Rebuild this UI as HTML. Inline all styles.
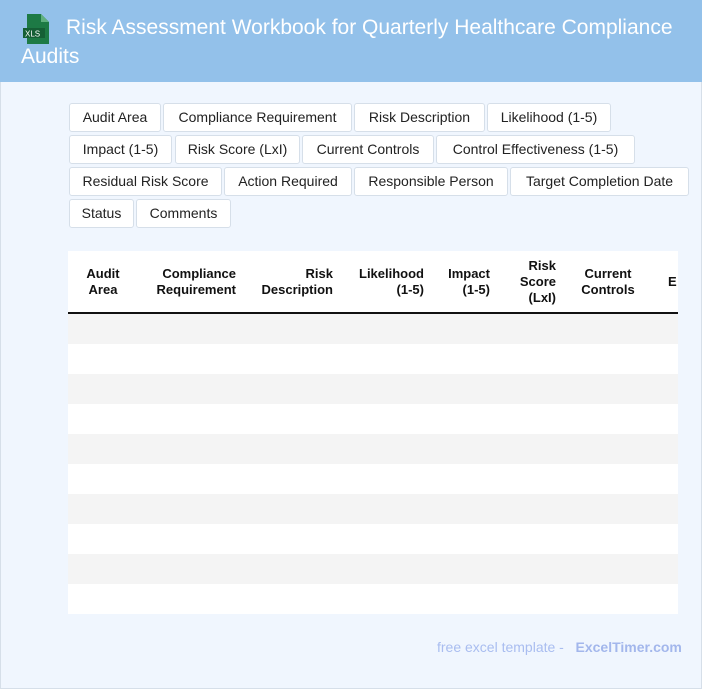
<!DOCTYPE html>
<html><head><style>
body{margin:0;width:702px;height:689px;overflow:hidden;font-family:"Liberation Sans",sans-serif;}
.wrap{position:absolute;left:0;top:0;width:700px;height:687px;background:#f0f6fe;border:1px solid #d6dfe9;}
.hdr{position:absolute;left:-1px;top:-1px;width:702px;height:82px;background:#93c1ea;}
.title{position:absolute;left:20px;top:12px;width:670px;color:#fff;font-size:21px;line-height:29px;text-indent:45px;}
.tag{position:absolute;height:29px;line-height:27px;border:1px solid #d6dfe9;background:#fff;border-radius:3px;font-size:14px;color:#222;box-sizing:border-box;text-align:center;white-space:nowrap;overflow:hidden;}
.tbl{position:absolute;left:67px;top:250px;width:610px;height:363px;background:#fff;overflow:hidden;}
.th{position:absolute;font-weight:bold;font-size:13px;line-height:16px;color:#111;}
.line{position:absolute;left:0;top:61px;width:610px;height:2px;background:#111;}
.row{position:absolute;left:0;width:610px;height:30px;}
</style></head><body>
<div class="wrap">
<div class="hdr"></div>
<svg style="position:absolute;left:21px;top:13px" width="29" height="30" viewBox="0 0 29 30"><path d="M5 0h14l8 8v22H5z" fill="#1d7a45"/><path d="M19 0v8h8z" fill="#5fb07f"/><rect x="1" y="14" width="22" height="10" fill="#155f35"/><text x="3" y="22.5" font-size="8" fill="#fff" font-family="Liberation Sans">XLS</text></svg>
<div class="title">Risk Assessment Workbook for Quarterly Healthcare Compliance Audits</div>

<div class="tag" style="left:68px;top:102px;width:92px">Audit Area</div>
<div class="tag" style="left:162px;top:102px;width:189px">Compliance Requirement</div>
<div class="tag" style="left:353px;top:102px;width:131px">Risk Description</div>
<div class="tag" style="left:486px;top:102px;width:124px">Likelihood (1-5)</div>
<div class="tag" style="left:68px;top:134px;width:103px">Impact (1-5)</div>
<div class="tag" style="left:174px;top:134px;width:125px">Risk Score (LxI)</div>
<div class="tag" style="left:301px;top:134px;width:132px">Current Controls</div>
<div class="tag" style="left:435px;top:134px;width:199px">Control Effectiveness (1-5)</div>
<div class="tag" style="left:68px;top:166px;width:153px">Residual Risk Score</div>
<div class="tag" style="left:223px;top:166px;width:128px">Action Required</div>
<div class="tag" style="left:353px;top:166px;width:154px">Responsible Person</div>
<div class="tag" style="left:509px;top:166px;width:179px">Target Completion Date</div>
<div class="tag" style="left:68px;top:198px;width:65px">Status</div>
<div class="tag" style="left:135px;top:198px;width:95px">Comments</div>

<div class="tbl">
<div class="th" style="left:14px;top:15px;width:42px;text-align:center">Audit<br>Area</div>
<div class="th" style="left:68px;top:15px;width:100px;text-align:right">Compliance<br>Requirement</div>
<div class="th" style="left:170px;top:15px;width:95px;text-align:right">Risk<br>Description</div>
<div class="th" style="left:270px;top:15px;width:86px;text-align:right">Likelihood<br>(1-5)</div>
<div class="th" style="left:362px;top:15px;width:60px;text-align:right">Impact<br>(1-5)</div>
<div class="th" style="left:440px;top:7px;width:48px;text-align:right">Risk<br>Score<br>(LxI)</div>
<div class="th" style="left:500px;top:15px;width:80px;text-align:center">Current<br>Controls</div>
<div class="th" style="left:600px;top:23px">E</div>
<div class="line"></div>
<div class="row" style="top:63px;background:#f4f4f4"></div>
<div class="row" style="top:123px;background:#f4f4f4"></div>
<div class="row" style="top:183px;background:#f4f4f4"></div>
<div class="row" style="top:243px;background:#f4f4f4"></div>
<div class="row" style="top:303px;background:#f4f4f4"></div>
</div>
<div style="position:absolute;left:436px;top:638px;font-size:14px;color:#a9bdf0">free excel template - &nbsp;&nbsp;<b style="color:#a3b7ec">ExcelTimer.com</b></div>
</div>
</body></html>
